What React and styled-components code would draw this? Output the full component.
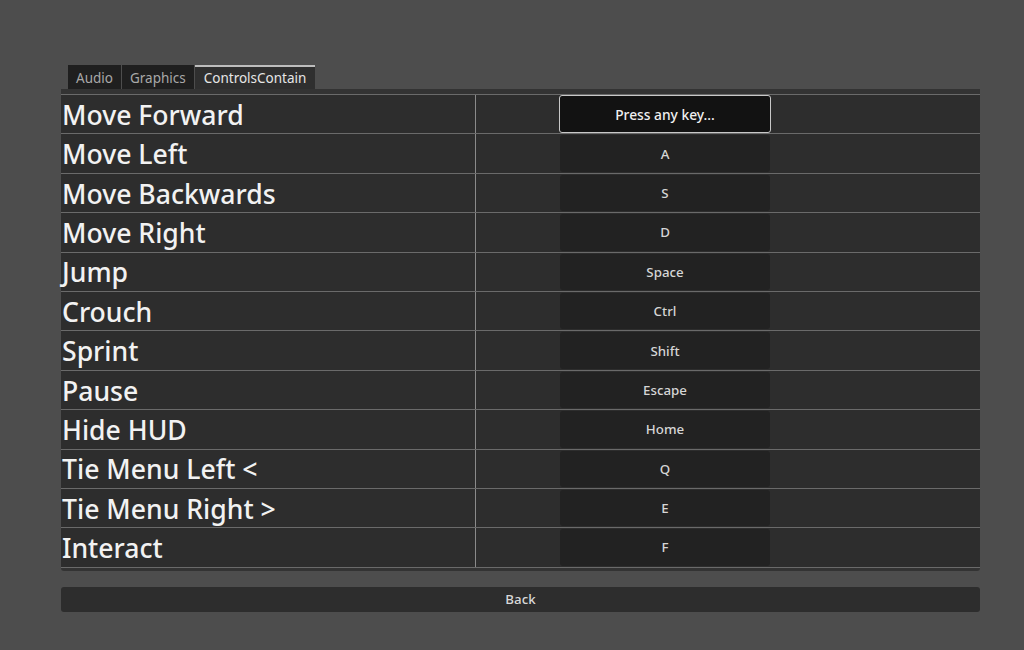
import React from 'react';
import styled, { createGlobalStyle } from 'styled-components';

const GlobalStyle = createGlobalStyle`
  html, body {
    margin: 0;
    padding: 0;
    background: #4d4d4d;
    font-family: "Noto Sans", "Open Sans", sans-serif;
  }
`;

const Screen = styled.div`
  width: 1024px;
  height: 650px;
  box-sizing: border-box;
  padding: 65px 44px 0 61px;
  display: flex;
  flex-direction: column;
`;

const TabBar = styled.div`
  display: flex;
  gap: 1px;
  padding-left: 7px;
  height: 24px;
`;

const Tab = styled.div`
  box-sizing: border-box;
  display: flex;
  align-items: center;
  padding: 0 ${p => (p.active ? '9px' : '8px')};
  font-size: 13.5px;
  color: ${p => (p.active ? '#e6e6e6' : '#a8a8a8')};
  background: ${p => (p.active ? '#2f2f2f' : '#1f1f1f')};
  border-top: 2px solid ${p => (p.active ? '#bdbdbd' : '#1f1f1f')};
`;

const Panel = styled.div`
  background: #333333;
  padding: 5px 0 3px;
  border-radius: 0 0 3px 3px;
`;

const Rows = styled.div`
  border-bottom: 1px solid #6a6a6a;
  background: #2d2d2d;
`;

const Row = styled.div`
  box-sizing: border-box;
  height: 39.4px;
  border-top: 1px solid #6a6a6a;
  display: grid;
  grid-template-columns: 414px 1px 83px 212px 1fr;
  align-items: stretch;
`;

const Label = styled.div`
  display: flex;
  align-items: center;
  padding: 2px 0 0 1px;
  font-size: 26.6px;
  font-weight: 500;
  color: #f2f2f2;
  white-space: nowrap;
  line-height: 1;
`;

const Divider = styled.div`
  background: #8a8a8a;
`;

const KeyButton = styled.div`
  box-sizing: border-box;
  margin: ${p => (p.focused ? '0' : '1px')};
  display: flex;
  align-items: center;
  justify-content: center;
  font-size: ${p => (p.focused ? '13.8px' : '13.3px')};
  font-weight: 500;
  color: ${p => (p.focused ? '#f0f0f0' : '#d6d6d6')};
  background: ${p => (p.focused ? '#121212' : '#222222')};
  border: ${p => (p.focused ? '1.5px solid #c8c8c8' : 'none')};
  border-radius: 3px;
`;

const BackButton = styled.div`
  margin-top: 16px;
  height: 25px;
  display: flex;
  align-items: center;
  justify-content: center;
  background: #2d2d2d;
  border-radius: 3px;
  font-size: 13.3px;
  font-weight: 500;
  color: #d8d8d8;
`;

const bindings = [
  ['Move Forward', 'Press any key...'],
  ['Move Left', 'A'],
  ['Move Backwards', 'S'],
  ['Move Right', 'D'],
  ['Jump', 'Space'],
  ['Crouch', 'Ctrl'],
  ['Sprint', 'Shift'],
  ['Pause', 'Escape'],
  ['Hide HUD', 'Home'],
  ['Tie Menu Left <', 'Q'],
  ['Tie Menu Right >', 'E'],
  ['Interact', 'F'],
];

const App = () => {
  return (
    <>
      <GlobalStyle />
      <Screen>
        <TabBar>
          <Tab>Audio</Tab>
          <Tab>Graphics</Tab>
          <Tab active>ControlsContain</Tab>
        </TabBar>
        <Panel>
          <Rows>
            {bindings.map(([action, key], i) => (
              <Row key={action}>
                <Label>{action}</Label>
                <Divider />
                <div />
                <KeyButton focused={i === 0}>{key}</KeyButton>
                <div />
              </Row>
            ))}
          </Rows>
        </Panel>
        <BackButton>Back</BackButton>
      </Screen>
    </>
  );
};

export default App;
